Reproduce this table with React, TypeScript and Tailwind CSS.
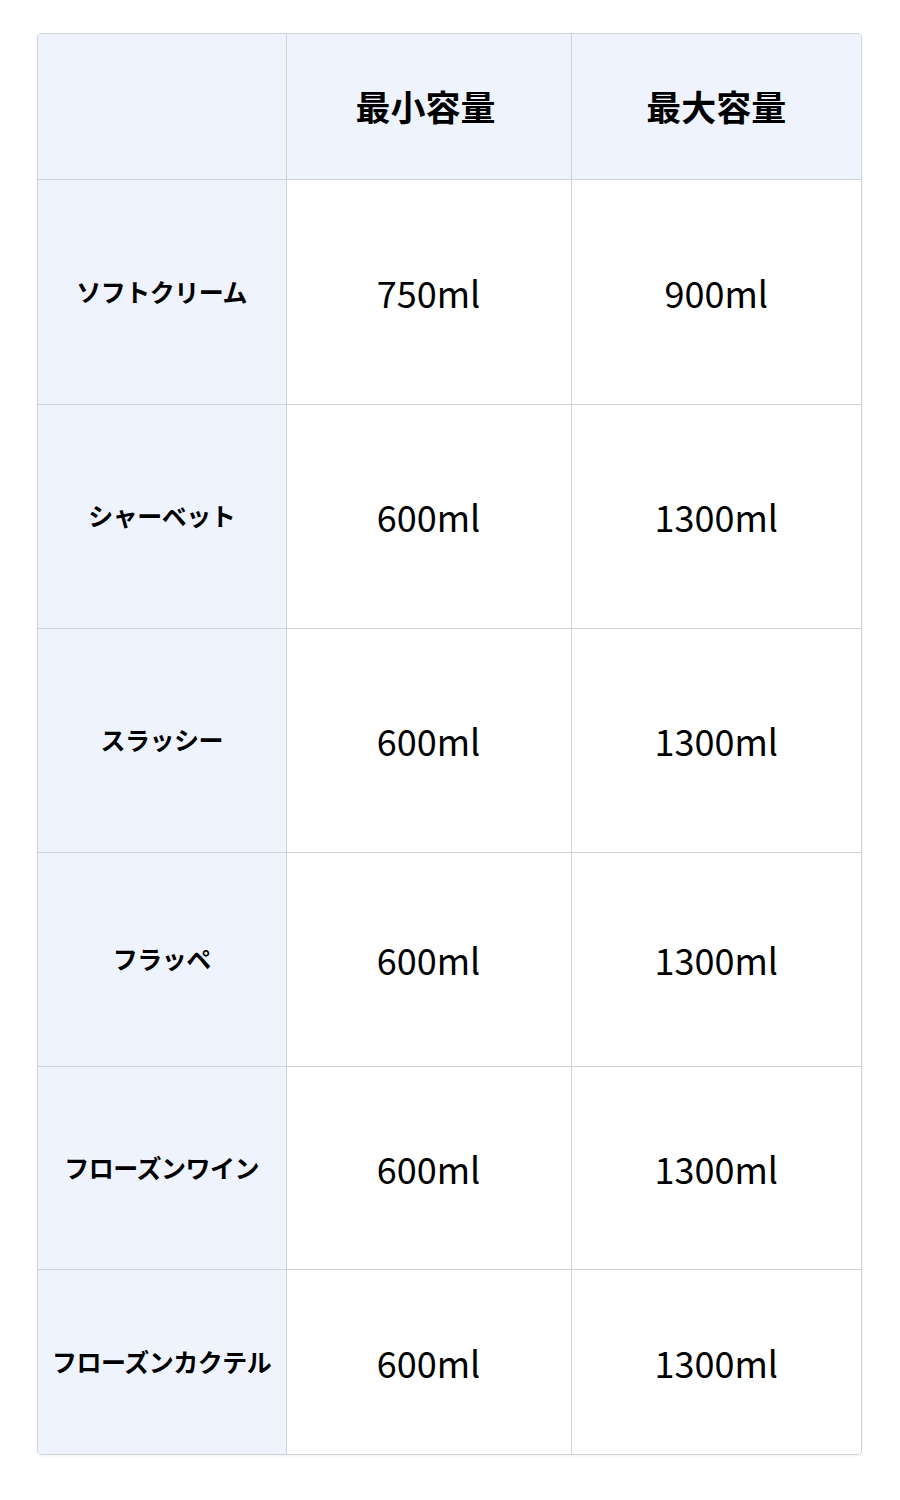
const rows = [
  { name: "ソフトクリーム", min: "750ml", max: "900ml", h: "h-[225px]" },
  { name: "シャーベット", min: "600ml", max: "1300ml", h: "h-[224px]" },
  { name: "スラッシー", min: "600ml", max: "1300ml", h: "h-[224px]" },
  { name: "フラッペ", min: "600ml", max: "1300ml", h: "h-[214px]" },
  { name: "フローズンワイン", min: "600ml", max: "1300ml", h: "h-[203px]" },
  { name: "フローズンカクテル", min: "600ml", max: "1300ml", h: "h-[185px]" },
];

export default function App() {
  return (
    <div className="min-h-[1500px] bg-white pt-[33px] pl-[37px] font-['Noto_Sans_CJK_JP',sans-serif] text-black">
      {/* Capacity table */}
      <div className="w-[825px] overflow-hidden rounded-[4px] border border-[#cfd3d8] shadow-[0_1px_3px_rgba(0,0,0,0.06)]">
        <table className="w-full table-fixed border-collapse">
          <colgroup>
            <col className="w-[248px]" />
            <col className="w-[285px]" />
            <col />
          </colgroup>
          <thead>
            <tr className="h-[145px] bg-[#eef3fd]">
              <th className="border-r border-b border-[#cfd3d8]" />
              <th className="border-r border-b border-[#cfd3d8] pr-[6px] text-[35px] font-bold">最小容量</th>
              <th className="border-b border-[#cfd3d8] text-[35px] font-bold">最大容量</th>
            </tr>
          </thead>
          <tbody>
            {rows.map((r, i) => (
              <tr key={r.name} className={r.h}>
                <td
                  className={`bg-[#eef3fd] border-r border-[#cfd3d8] text-center text-[25px] font-bold tracking-[-0.5px] ${
                    i < rows.length - 1 ? "border-b" : ""
                  }`}
                >
                  {r.name}
                </td>
                <td
                  className={`bg-white border-r border-[#cfd3d8] text-center text-[36px] font-normal ${
                    i < rows.length - 1 ? "border-b" : ""
                  }`}
                >
                  {r.min}
                </td>
                <td
                  className={`bg-white border-[#cfd3d8] text-center text-[36px] font-normal ${
                    i < rows.length - 1 ? "border-b" : ""
                  }`}
                >
                  {r.max}
                </td>
              </tr>
            ))}
          </tbody>
        </table>
      </div>
    </div>
  );
}
